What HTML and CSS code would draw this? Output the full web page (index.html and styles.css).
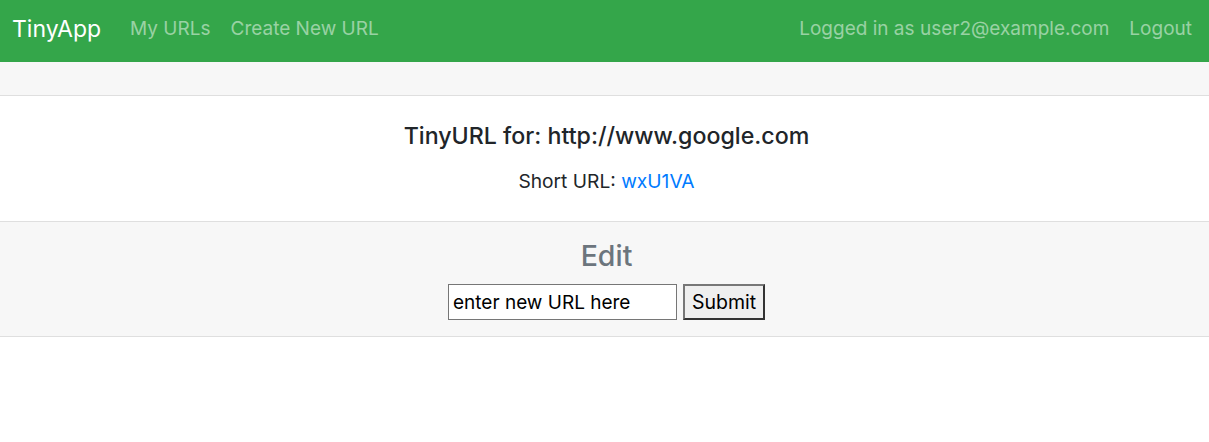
FILE: index.html
```html
<!DOCTYPE html>
<html>
<head>
<meta charset="utf-8">
<title>TinyApp</title>
<link rel="stylesheet" href="styles.css">
</head>
<body>
<nav class="navbar">
  <div class="nav-left">
    <a class="brand" href="#">TinyApp</a>
    <a class="nav-link" href="#">My URLs</a>
    <a class="nav-link" href="#">Create New URL</a>
  </div>
  <div class="nav-right">
    <span class="nav-link">Logged in as user2@example.com</span>
    <a class="nav-link" href="#">Logout</a>
  </div>
</nav>
<div class="card">
  <div class="card-header"></div>
  <div class="card-body">
    <h5 class="card-title">TinyURL for: http://www.google.com</h5>
    <p class="card-text">Short URL: <a class="short" href="#">wxU1VA</a></p>
  </div>
  <div class="card-footer">
    <h3 class="edit-title">Edit</h3>
    <form class="edit-form">
      <input class="url-input" type="text" value="enter new URL here">
      <button class="submit-btn" type="button">Submit</button>
    </form>
  </div>
</div>
</body>
</html>
```
FILE: styles.css
```css
* { box-sizing: border-box; }
body {
  margin: 0;
  font-family: Inter, "Liberation Sans", sans-serif;
  color: #212529;
  background: #fff;
}
a { text-decoration: none; }
.navbar {
  height: 62px;
  background: #34a64a;
  display: flex;
  align-items: center;
  justify-content: space-between;
  padding: 0 17px 4px 12px;
}
.nav-left, .nav-right {
  display: flex;
  align-items: center;
  gap: 20px;
}
.nav-left { gap: 20px; }
.brand {
  color: #fff;
  font-size: 23px;
  margin-right: 9px;
  line-height: 34px;
}
.nav-link {
  color: rgba(255,255,255,0.5);
  font-size: 19px;
  line-height: 28px;
}
.card {
  border-bottom: 1px solid #dfdfdf;
}
.card-header {
  height: 34px;
  background: #f7f7f7;
  border-bottom: 1px solid #dfdfdf;
}
.card-body {
  text-align: center;
  padding: 26px 18px 0 22px;
  height: 126px;
  border-bottom: 1px solid #dfdfdf;
}
.card-title {
  margin: 0 0 17px;
  font-size: 23.2px;
  font-weight: 500;
  line-height: 28px;
}
.card-text {
  margin: 0;
  font-size: 19.2px;
  line-height: 29px;
}
.short { color: #007bff; }
.card-footer {
  background: #f7f7f7;
  text-align: center;
  padding: 17px 18px 0 22px;
  height: 114px;
}
.edit-title {
  margin: 0 0 11px;
  font-size: 28.5px;
  font-weight: 500;
  line-height: 34px;
  color: #6c757d;
}
.edit-form {
  display: flex;
  justify-content: center;
  gap: 6px;
}
.url-input {
  width: 229px;
  height: 36px;
  font-family: inherit;
  font-size: 19px;
  padding: 0 4px;
  border: 1px solid #767676;
  border-radius: 0;
  background: #fff;
  color: #000;
}
.submit-btn {
  width: 82px;
  height: 36px;
  font-family: inherit;
  font-size: 19.5px;
  color: #000;
  background: #efefef;
  border: 2px solid #333;
  border-top-color: #777;
  border-left-color: #777;
  border-radius: 0;
  padding: 0;
}
```
